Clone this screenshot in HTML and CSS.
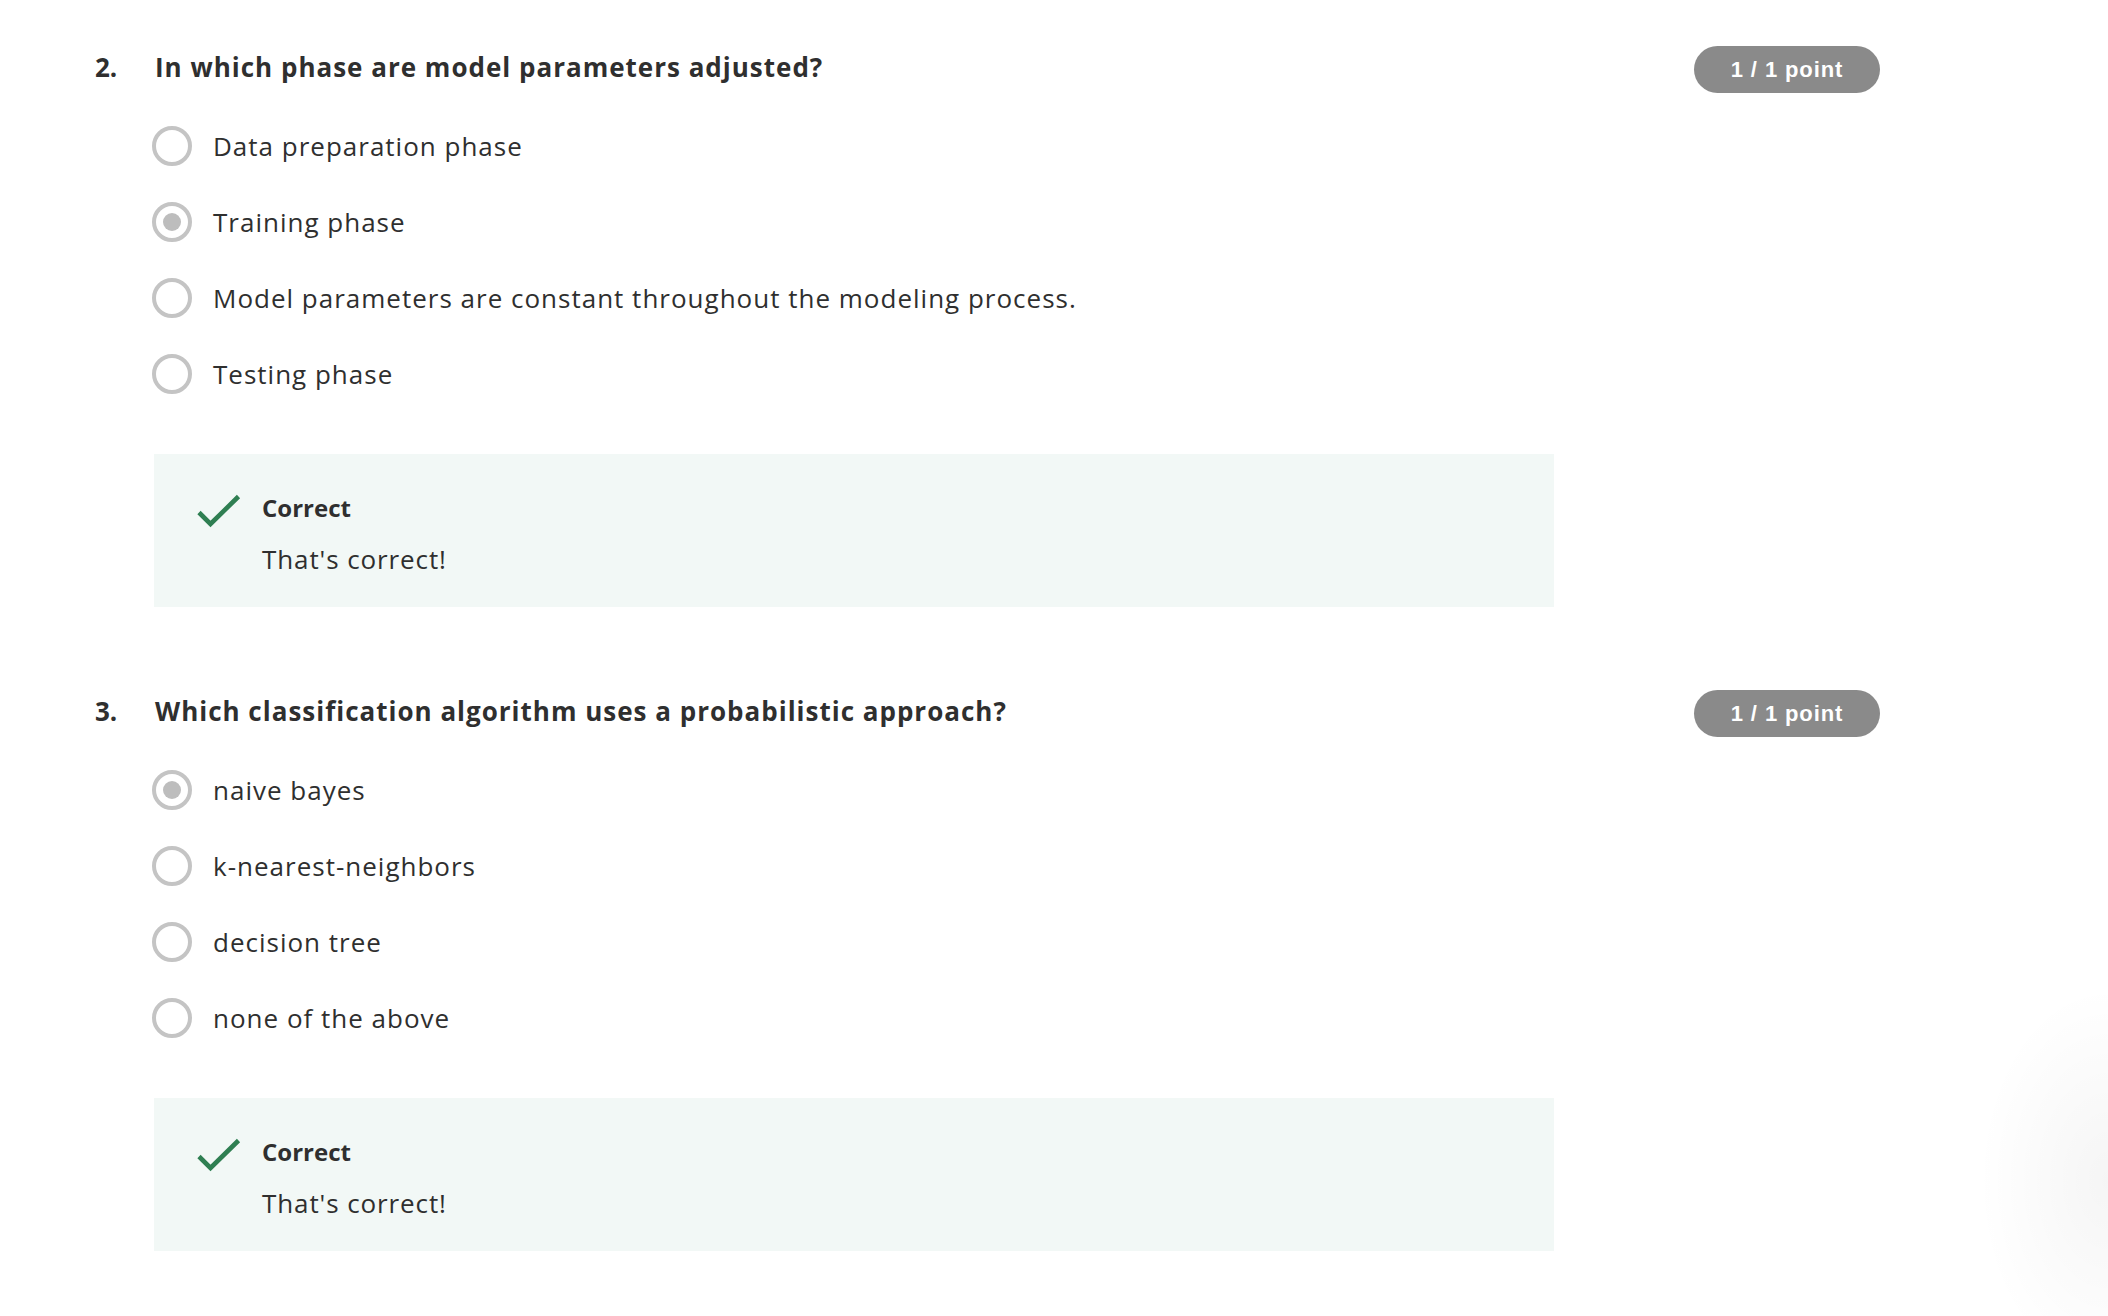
FILE: index.html
```html
<!DOCTYPE html>
<html lang="en">
<head>
<meta charset="utf-8">
<title>Quiz results</title>
<link rel="stylesheet" href="styles.css">
</head>
<body>
<main class="quiz">
  <section class="question">
    <div class="q-head">
      <span class="q-num">2.</span>
      <h3 class="q-text">In which phase are model parameters adjusted?</h3>
      <span class="badge">1 / 1 point</span>
    </div>
    <ul class="options">
      <li class="option"><span class="radio"></span><span class="label">Data preparation phase</span></li>
      <li class="option"><span class="radio checked"></span><span class="label">Training phase</span></li>
      <li class="option"><span class="radio"></span><span class="label">Model parameters are constant throughout the modeling process.</span></li>
      <li class="option"><span class="radio"></span><span class="label">Testing phase</span></li>
    </ul>
    <div class="feedback">
      <svg class="check" width="44" height="34" viewBox="0 0 44 34"><path d="M2 18.5 L13.5 30 L41.5 2.5" fill="none" stroke="#2f7f52" stroke-width="4.6"/></svg>
      <div class="fb-text">
        <div class="fb-title">Correct</div>
        <div class="fb-body">That's correct!</div>
      </div>
    </div>
  </section>

  <section class="question">
    <div class="q-head">
      <span class="q-num">3.</span>
      <h3 class="q-text">Which classification algorithm uses a probabilistic approach?</h3>
      <span class="badge">1 / 1 point</span>
    </div>
    <ul class="options">
      <li class="option"><span class="radio checked"></span><span class="label">naive bayes</span></li>
      <li class="option"><span class="radio"></span><span class="label">k-nearest-neighbors</span></li>
      <li class="option"><span class="radio"></span><span class="label">decision tree</span></li>
      <li class="option"><span class="radio"></span><span class="label">none of the above</span></li>
    </ul>
    <div class="feedback">
      <svg class="check" width="44" height="34" viewBox="0 0 44 34"><path d="M2 18.5 L13.5 30 L41.5 2.5" fill="none" stroke="#2f7f52" stroke-width="4.6"/></svg>
      <div class="fb-text">
        <div class="fb-title">Correct</div>
        <div class="fb-body">That's correct!</div>
      </div>
    </div>
  </section>
</main>
<div class="side-shadow"></div>
</body>
</html>
```
FILE: styles.css
```css
html, body {
  margin: 0;
  padding: 0;
  background: #ffffff;
}
body {
  font-family: "Open Sans", "Noto Sans", sans-serif;
  color: #2f2f2f;
  overflow: hidden;
  height: 1316px;
  position: relative;
}
.quiz {
  padding: 46px 0 0 95px;
  width: 1785px;
  display: flex;
  flex-direction: column;
  gap: 83px;
}
.question {
  display: flex;
  flex-direction: column;
}
.q-head {
  display: flex;
  align-items: flex-start;
  height: 47px;
}
.q-num {
  width: 60px;
  font-size: 26px;
  font-weight: 700;
  line-height: 42px;
}
.q-text {
  flex: 1;
  margin: 0;
  font-size: 26px;
  font-weight: 700;
  line-height: 42px;
  letter-spacing: 1px;
}
.badge {
  width: 186px;
  height: 47px;
  border-radius: 24px;
  background: #8a8a8a;
  color: #ffffff;
  font-family: "Liberation Sans", Arial, sans-serif;
  font-weight: 700;
  font-size: 22px;
  letter-spacing: 0.9px;
  display: flex;
  align-items: center;
  justify-content: center;
}
.options {
  list-style: none;
  margin: 15px 0 0 57px;
  padding: 0;
}
.option {
  height: 76px;
  display: flex;
  align-items: center;
  gap: 21px;
}
.radio {
  width: 40px;
  height: 40px;
  box-sizing: border-box;
  border: 4px solid #c4c4c4;
  border-radius: 50%;
  display: flex;
  align-items: center;
  justify-content: center;
  flex: none;
}
.radio.checked::after {
  content: "";
  width: 18px;
  height: 18px;
  border-radius: 50%;
  background: #bdbdbd;
}
.label {
  font-size: 26px;
  line-height: 36px;
  letter-spacing: 1px;
}
.feedback {
  margin: 42px 0 0 59px;
  width: 1400px;
  box-sizing: border-box;
  background: #f2f8f6;
  padding: 40px 43px 29px;
  display: flex;
  gap: 21px;
}
.check {
  flex: none;
}
.fb-title {
  font-size: 24px;
  font-weight: 700;
  line-height: 28px;
}
.fb-body {
  margin-top: 18px;
  font-size: 26px;
  line-height: 38px;
  letter-spacing: 0.9px;
}
.side-shadow {
  position: absolute;
  right: 0;
  top: 960px;
  width: 130px;
  height: 356px;
  background: radial-gradient(ellipse 100% 55% at 100% 62%, rgba(0, 0, 0, 0.04), rgba(0, 0, 0, 0) 100%);
  pointer-events: none;
}
```
